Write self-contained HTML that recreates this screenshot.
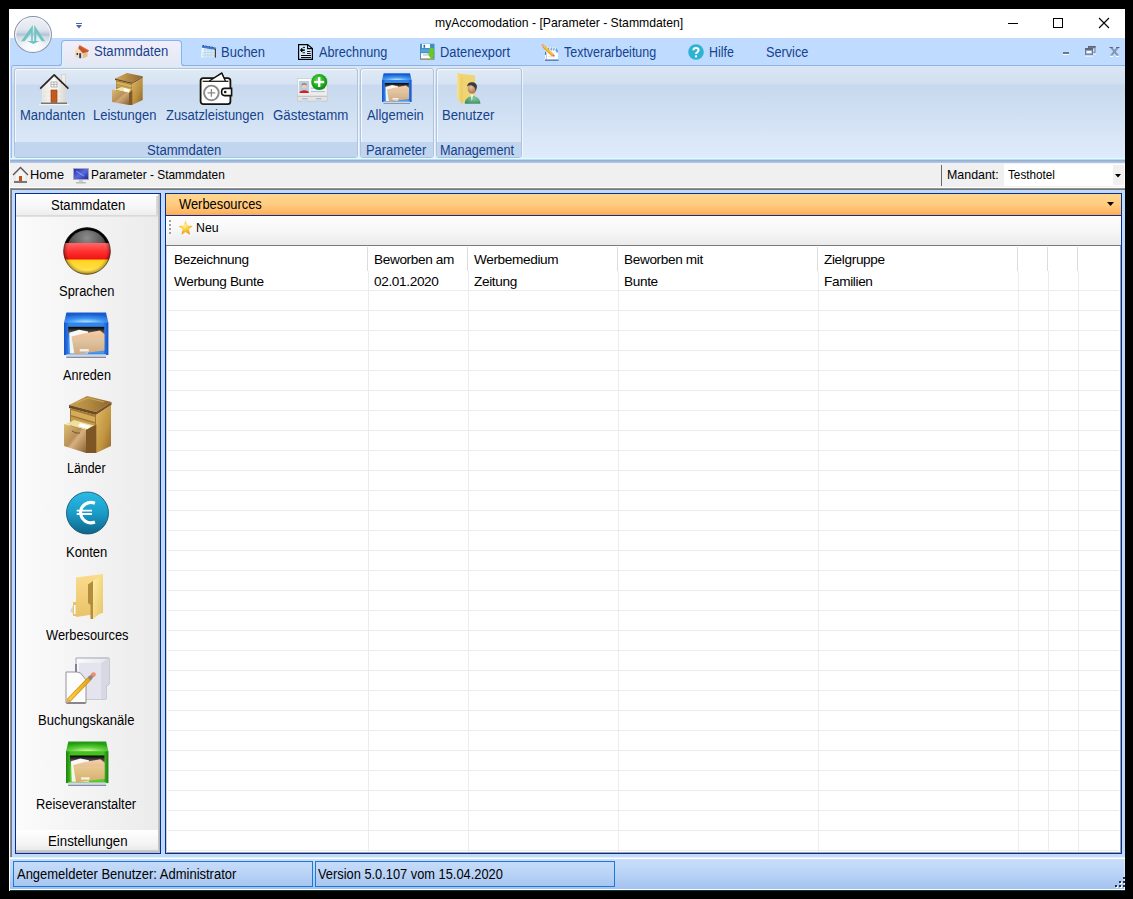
<!DOCTYPE html>
<html><head><meta charset="utf-8">
<style>
*{margin:0;padding:0;box-sizing:border-box}
html,body{width:1133px;height:899px;overflow:hidden;background:#000;font-family:"Liberation Sans",sans-serif;position:relative}
.a{position:absolute}
.t{position:absolute;white-space:nowrap;line-height:1}
svg{position:absolute;overflow:visible}
</style></head><body>
<!-- window frame -->
<div class="a" style="left:9px;top:9px;width:1116px;height:882px;background:#fff"></div>
<div class="a" style="left:10px;top:38px;width:1115px;height:851px;background:#bfdbff"></div>

<!-- title bar -->
<div class="t" style="left:435.03px;top:17px;font-size:12.6px;transform:scaleX(0.9686);transform-origin:0 0;color:#000">myAccomodation - [Parameter - Stammdaten]</div>
<div class="a" style="left:1008px;top:23px;width:10px;height:1px;background:#000"></div>
<div class="a" style="left:1053px;top:18px;width:10px;height:10px;border:1px solid #000"></div>
<svg style="left:1099px;top:18px" width="10" height="10"><path d="M0 0L10 10M10 0L0 10" stroke="#000" stroke-width="1.1"/></svg>

<!-- tabs strip -->
<div class="a" style="left:10px;top:38px;width:1115px;height:28px;background:#bfdbff"></div>
<!-- ribbon panel -->
<div class="a" id="ribbon" style="left:11px;top:65px;width:1114px;height:98px;border-top:1px solid #8db2e3;border-left:1px solid #9ebde6;border-radius:3px 0 0 0;background:linear-gradient(#dbe6f4 0,#d0dff0 18px,#c6d8ee 19px,#e0ecfb 93px,#a7e3f0 94px,#a7e3f0 95px,#9ab4d8 95px)"></div>


<!-- app button -->
<div class="a" style="left:14px;top:16px;width:37.5px;height:37px;border-radius:50%;border:1.3px solid #8793a8;background:radial-gradient(circle at 50% 100%,#ffffff 0,#f6f8fb 25%,rgba(255,255,255,0) 50%),linear-gradient(#eef1f6 0,#e2e7ef 35%,#c8d2e2 46%,#b4c2d8 50%,#d2dae6 58%,#eef1f6 100%);box-shadow:inset 0 0 0 1.2px #f4f6fa"></div>
<svg style="left:14px;top:16px" width="37" height="37">
 <path d="M18.8 9 L7 25.2 L10.6 25.2 L17.2 16.8 V26.5 H18.8Z" fill="#70c4c2"/>
 <path d="M20.2 9 L31.2 25.2 L27.8 25.2 L22.2 17 V26.5 H20.2Z" fill="#70c4c2"/>
 <path d="M13.2 24.9 H25.4 L19.3 27.9Z" fill="#70c4c2"/>
</svg>
<!-- QAT arrow -->
<div class="a" style="left:76px;top:23px;width:6px;height:1px;background:#4a6aa5"></div>
<svg style="left:76px;top:25px" width="6" height="4"><path d="M0 0L6 0L3 3.5Z" fill="#4a6aa5"/></svg>

<!-- active tab -->
<div class="a" style="left:61px;top:40px;width:121px;height:26px;border:1px solid #8db2e3;border-bottom:none;border-radius:4px 4px 0 0;background:linear-gradient(#f0eefa 0,#ebebf7 50%,#e2e8f5 100%);box-shadow:inset 1px 0 0 #d4f4ff,inset -1px 0 0 #d4f4ff"></div>
<div class="a" style="left:59px;top:64px;width:3px;height:1px;background:#a8c4ea"></div>
<div class="a" style="left:181px;top:64px;width:3px;height:1px;background:#a8c4ea"></div>
<div class="a" style="left:61px;top:65px;width:121px;height:2px;background:#e0e8f4"></div>

<!-- tab labels -->
<div class="t" style="left:93.67px;top:44px;font-size:14.0px;transform:scaleX(0.9346);transform-origin:0 0;color:#15428b">Stammdaten</div>
<div class="t" style="left:220.57px;top:45px;font-size:14.0px;transform:scaleX(0.9283);transform-origin:0 0;color:#15428b">Buchen</div>
<div class="t" style="left:318.6px;top:45px;font-size:14.0px;transform:scaleX(0.9053);transform-origin:0 0;color:#15428b">Abrechnung</div>
<div class="t" style="left:439.98px;top:45px;font-size:14.0px;transform:scaleX(0.9173);transform-origin:0 0;color:#15428b">Datenexport</div>
<div class="t" style="left:563.6px;top:45px;font-size:14.0px;transform:scaleX(0.8903);transform-origin:0 0;color:#15428b">Textverarbeitung</div>
<div class="t" style="left:708.81px;top:45px;font-size:14.0px;transform:scaleX(0.8852);transform-origin:0 0;color:#15428b">Hilfe</div>
<div class="t" style="left:766.49px;top:45px;font-size:14.0px;transform:scaleX(0.9067);transform-origin:0 0;color:#15428b">Service</div>
<!-- tab icons -->
<svg style="left:72px;top:42px" width="20" height="20">
 <path d="M3 8.5 L6.5 5.8 L10.8 10.8 L10.8 16.6 L3 15Z" fill="#f6ddb0"/>
 <path d="M6.2 6 L7.6 3.2 L16.9 8.4 L15.6 10.2 L10.8 11.2Z" fill="#c9532b"/>
 <path d="M7.6 3.2 L16.9 8.4 L16.4 9.2 L7.2 4.2Z" fill="#d96a3c"/>
 <path d="M10.8 11.2 L15.6 10.2 L15.6 14.5 L10.8 16.6Z" fill="#e3c088"/>
 <ellipse cx="5.3" cy="12" rx="0.9" ry="1" fill="#1e1e28"/>
 <rect x="7.2" y="11.2" width="1.9" height="5" fill="#1c3f9c"/>
</svg>
<svg style="left:198px;top:42px" width="20" height="20">
 <defs><linearGradient id="calb" x1="0" y1="0" x2="1" y2="1"><stop offset="0" stop-color="#ffffff"/><stop offset="1" stop-color="#cfe4f2"/></linearGradient></defs>
 <path d="M4 4 L17.5 6 L17 15.5 L3 15.5Z" fill="url(#calb)"/>
 <path d="M4 3.2 L17.8 5.5 L17.6 8 L4 5.8Z" fill="#3a78d8"/>
 <path d="M5 3 L6 4.2 M8 3.5 L9 4.6 M11 4 L12 5.2 M14 4.5 L15 5.7" stroke="#333" stroke-width=".8"/>
 <path d="M5 8h11M4.5 10.5h12M4 13h12.5M7 6.5v9M10 7v8.5M13 7.5v8" stroke="#a8d0e8" stroke-width=".7"/>
 <path d="M16.8 6.5 L18 7 L18 15.2 L16.8 16Z" fill="#4a3a28"/>
</svg>
<svg style="left:295px;top:42px" width="20" height="20">
 <path d="M3.6 2.6 H12.6 L17.4 6.6 V17.4 H3.6Z" fill="#d4eaff" stroke="#000" stroke-width="1.2"/>
 <path d="M12.6 2.6 V6.6 H17.4" fill="none" stroke="#000" stroke-width="1.1"/>
 <rect x="5.2" y="7.3" width="4.6" height="1.6" fill="#000"/>
 <rect x="6" y="6.2" width="1.4" height="3.8" fill="#000"/>
 <rect x="7.8" y="4.9" width="2.2" height="0.9" fill="#000"/>
 <rect x="7.5" y="10.3" width="2.5" height="0.9" fill="#000"/>
 <rect x="12" y="9" width="3.6" height="0.9" fill="#000"/>
 <rect x="12" y="11" width="3.6" height="0.9" fill="#000"/>
 <rect x="6" y="13" width="10" height="1" fill="#000"/>
 <rect x="6" y="15" width="10" height="1" fill="#000"/>
</svg>
<svg style="left:416px;top:42px" width="20" height="20">
 <rect x="4" y="1.8" width="14.5" height="16" rx=".6" fill="#3f8ec6"/>
 <rect x="6" y="2" width="8" height="4" fill="#fafcff"/>
 <rect x="7.5" y="2.8" width="1.6" height="3" fill="#2a6ea8"/>
 <rect x="5" y="7.2" width="12.5" height="3" fill="#57a2d6"/>
 <rect x="5" y="11.2" width="11" height="5.8" fill="#fbfcfe"/>
 <rect x="7" y="12.5" width="5" height="1" fill="#aab6c8"/>
 <rect x="5" y="16.2" width="13" height="1" fill="#e0a030"/>
 <path d="M13.5 6 H17.5 V11.5 H19.3 L15.5 17.5 L11.3 11.5 H13.5Z" fill="#6cc81c"/>
</svg>
<svg style="left:539px;top:42px" width="22" height="20">
 <rect x="6" y="7.5" width="13" height="10.5" fill="#f4f6fb"/>
 <rect x="6" y="11.5" width="13" height="6" fill="#ffffff"/>
 <path d="M9.5 5.5v3M12.2 5.5v3M14.8 5.5v3M17.2 6v3" stroke="#5a8ad0" stroke-width="1"/>
 <path d="M9 5v1.5M11.7 5v1.5M14.3 5v1.5M16.7 5.5v1.5" stroke="#fff" stroke-width="1"/>
 <rect x="6" y="9.5" width="1.3" height="3.5" rx=".6" fill="#2a8ae0"/>
 <rect x="17.4" y="7.5" width="1.3" height="3" rx=".6" fill="#2a8ae0"/>
 <rect x="7.2" y="12.5" width=".8" height="5" fill="#f0a0a8"/>
 <path d="M9 14.8 H16" stroke="#ccc" stroke-width=".6"/>
 <rect x="6" y="17.5" width="13.5" height="1.3" fill="#3a72b8"/>
 <path d="M4.5 4.5 L14 13.5" stroke="#e09a10" stroke-width="2.6"/>
 <path d="M4.5 4 L14 13" stroke="#ffc830" stroke-width="1.4"/>
 <path d="M3 2.5 L4.8 4.3" stroke="#f0a090" stroke-width="2.4"/>
 <circle cx="14.6" cy="13.6" r="1" fill="#d87040"/>
</svg>
<svg style="left:688px;top:44px" width="16" height="16">
 <circle cx="8" cy="8" r="7.8" fill="#2eb3d2"/>
 <path d="M5.4 6.2 C5.4 3.2 10.6 3.2 10.6 6.2 C10.6 8 8 8.2 8 10" fill="none" stroke="#fff" stroke-width="2"/>
 <rect x="7" y="11.3" width="2" height="2" fill="#fff"/>
</svg>

<!-- MDI buttons -->
<div class="a" style="left:1063px;top:52px;width:6px;height:2px;background:#6d7888;box-shadow:0 1px 0 #fff"></div>
<svg style="left:1085px;top:46px" width="12" height="12">
 <rect x="3.5" y="0.5" width="6.5" height="6.5" fill="#b8c8e0" stroke="#7688a4" stroke-width="1"/>
 <rect x="3" y="0" width="7.5" height="1.8" fill="#5b6576"/>
 <rect x="5" y="3" width="3.5" height="2" fill="#f4f8ff"/>
 <rect x="0.5" y="2.5" width="7" height="6.5" fill="#8aa0c0" stroke="#6a7c98" stroke-width="1"/>
 <rect x="0" y="2" width="8" height="1.8" fill="#5b6576"/>
 <rect x="1.5" y="5" width="5" height="2.2" fill="#f4f8ff"/>
 <rect x="0" y="9.5" width="8" height="1" fill="#fff"/>
 <rect x="8" y="7.5" width="3" height="1" fill="#fff"/>
</svg>
<svg style="left:1109px;top:47px" width="11" height="10">
 <path d="M1 9.5 H4 M7 9.5 H10" stroke="#fff" stroke-width="1"/>
 <path d="M1 0.5 H3.5 L5.5 3 L7.5 0.5 H10 L6.8 4.5 L10 8.5 H7.5 L5.5 6 L3.5 8.5 H1 L4.2 4.5Z" fill="#8294b0"/>
 <path d="M0.5 0.5 H3.8M7.2 0.5 H10.5" stroke="#5b6576" stroke-width="1"/>
</svg>

<style>
.grp{position:absolute;top:68px;height:90px;border:1px solid #adc4de;border-radius:3px;background:linear-gradient(#e0eaf6 0,#d6e3f2 15px,#c8d9ef 16px,#cfdff2 40px,#dae7f7 73px);box-shadow:inset 1px 1px 0 rgba(255,255,255,.75),1px 0 0 rgba(255,255,255,.6)}
.glab{position:absolute;left:0;right:0;bottom:0;height:15px;background:#c2d5ee;border-radius:0 0 2px 2px}
.gl{position:absolute;white-space:nowrap;line-height:1;font-size:13px;color:#15428b}
</style>
<div class="grp" style="left:14px;width:344px"><div class="glab"></div></div>
<div class="grp" style="left:360px;width:74px"><div class="glab"></div></div>
<div class="grp" style="left:436px;width:86px"><div class="glab"></div></div>
<div class="gl" style="left:20.17px;top:108px;font-size:14.0px;transform:scaleX(0.9309);transform-origin:0 0">Mandanten</div>
<div class="gl" style="left:93.37px;top:108px;font-size:14.0px;transform:scaleX(0.9254);transform-origin:0 0">Leistungen</div>
<div class="gl" style="left:166.2px;top:108px;font-size:14.0px;transform:scaleX(0.9248);transform-origin:0 0">Zusatzleistungen</div>
<div class="gl" style="left:272.95px;top:108px;font-size:14.0px;transform:scaleX(0.95);transform-origin:0 0">Gästestamm</div>
<div class="gl" style="left:367.0px;top:108px;font-size:14.0px;transform:scaleX(0.923);transform-origin:0 0">Allgemein</div>
<div class="gl" style="left:442.47px;top:108px;font-size:14.0px;transform:scaleX(0.9345);transform-origin:0 0">Benutzer</div>
<div class="gl" style="left:147.36px;top:143px;font-size:14.0px;transform:scaleX(0.9372);transform-origin:0 0">Stammdaten</div>
<div class="gl" style="left:365.68px;top:143px;font-size:14.0px;transform:scaleX(0.9234);transform-origin:0 0">Parameter</div>
<div class="gl" style="left:439.79px;top:143px;font-size:14.0px;transform:scaleX(0.9062);transform-origin:0 0">Management</div>

<!-- ribbon icons -->
<svg style="left:38px;top:73px" width="33" height="33">
 <defs><linearGradient id="hw" x1="0" x2="1"><stop offset="0" stop-color="#e8e6df"/><stop offset=".5" stop-color="#fbfbf8"/><stop offset="1" stop-color="#d8d6cf"/></linearGradient></defs>
 <rect x="23.5" y="1.5" width="4" height="14" fill="#efeee8" stroke="#c9c7bf" stroke-width=".6"/>
 <path d="M4 15 L16 4 L28 15 V30 H4Z" fill="url(#hw)"/>
 <path d="M2.2 15.6 L16.2 1.8 L30.4 15.6" fill="none" stroke="#2e2420" stroke-width="1.7" stroke-linejoin="round"/>
 <path d="M5 19h22M5 23h22M5 27h22" stroke="#e0ded6" stroke-width=".6"/>
 <rect x="13" y="9" width="6" height="5" fill="#fafafa" stroke="#999" stroke-width=".7"/>
 <path d="M16 9v5M13 11.5h6" stroke="#999" stroke-width=".6"/>
 <rect x="13" y="17" width="6" height="12.5" fill="#c55a1e" stroke="#8a3a10" stroke-width=".6"/>
 <rect x="3" y="29.5" width="26" height="2" fill="#7a7670"/>
 <rect x="1" y="31" width="30" height="1.2" fill="#f4f4f4"/>
</svg>
<svg style="left:112px;top:73px" width="31" height="32" viewBox="0 0 31 32">
 <defs>
  <linearGradient id="lk1" x1="0" y1="0" x2="1" y2="0"><stop offset="0" stop-color="#d2aa58"/><stop offset="1" stop-color="#8e6630"/></linearGradient>
  <linearGradient id="lk2" x1="0" y1="0" x2="1" y2="1"><stop offset="0" stop-color="#dcb462"/><stop offset=".6" stop-color="#b88c3c"/><stop offset="1" stop-color="#8a6028"/></linearGradient>
  <linearGradient id="lk3" x1="0" y1="0" x2="1" y2="1"><stop offset="0" stop-color="#dcbc70"/><stop offset=".45" stop-color="#b8905a"/><stop offset=".55" stop-color="#d0a878"/><stop offset="1" stop-color="#8a6030"/></linearGradient>
 </defs>
 <path d="M3 5.5 L15 0 L30.7 3.3 L20 9.5Z" fill="url(#lk1)"/>
 <path d="M3 5.5 L20 9.5 V11 L3 7Z" fill="#6e4a20"/>
 <path d="M20 9.5 L30.7 3.3 V5 L20 11Z" fill="#7e5628"/>
 <path d="M4 7 L20.5 11 V29 L4 25Z" fill="#a88038"/>
 <path d="M4.5 8.5 L19.5 12 V14.5 L4.5 11Z" fill="#d8b060"/>
 <path d="M4.5 11.5 L19.5 15 V17.5 L4.5 14Z" fill="#c8a050"/>
 <path d="M20 11 L30.7 5 V27 L20 32Z" fill="url(#lk2)"/>
 <path d="M3 16.5 L10 14 L19 16.5 L17 20Z" fill="#f0e6a8"/>
 <path d="M12 15 L17 16.5 L17 19 L12 18Z" fill="#ffffff"/>
 <path d="M0 16.5 L17 20 V32 L0 29Z" fill="url(#lk3)"/>
 <path d="M17 20 L20.3 17.5 V32 L17 32Z" fill="#7e5a2a"/>
</svg>
<svg style="left:199px;top:72px" width="35" height="34">
 <path d="M10.3 9.3 L22.8 1.2 L26.4 9.3" fill="#fff" stroke="#16120e" stroke-width="1.4" stroke-linejoin="round"/>
 <rect x="1.6" y="6.2" width="29.8" height="26" rx="2.6" fill="#fff" stroke="#16120e" stroke-width="1.8"/>
 <path d="M10.3 9 L22.8 1.2 L26.4 9" fill="#fff" stroke="#16120e" stroke-width="1.4" stroke-linejoin="round"/>
 <path d="M3.6 9.3 H29.5" stroke="#16120e" stroke-width="1.2"/>
 <circle cx="12.4" cy="20.9" r="7.3" fill="none" stroke="#8a8a8a" stroke-width="1.9"/>
 <path d="M12.4 17.1 V24.7 M8.6 20.9 H16.2" stroke="#8a8a8a" stroke-width="1.3"/>
 <path d="M32.6 16.4 H25.6 Q22.6 16.4 22.6 20 Q22.6 23.6 25.6 23.6 H32.6Z" fill="#fff" stroke="#16120e" stroke-width="1.6"/>
 <circle cx="26.2" cy="20" r="1.3" fill="#16120e"/>
</svg>
<svg style="left:296px;top:73px" width="33" height="30" viewBox="0 0 33 30">
 <defs><linearGradient id="card" x1="0" y1="0" x2="0" y2="1"><stop offset="0" stop-color="#fdfdfd"/><stop offset=".7" stop-color="#ececec"/><stop offset="1" stop-color="#dcdcdc"/></linearGradient>
 <radialGradient id="gp" cx=".45" cy=".4" r=".65"><stop offset="0" stop-color="#7ae05a"/><stop offset=".55" stop-color="#22b020"/><stop offset="1" stop-color="#0a7a12"/></radialGradient></defs>
 <rect x="1.4" y="5.6" width="29.8" height="23" fill="url(#card)" stroke="#c4c4c4" stroke-width=".6"/>
 <rect x="3.2" y="8" width="9.8" height="12" fill="#b4cce8"/>
 <circle cx="8.2" cy="13" r="2.4" fill="#f2cca6"/>
 <path d="M5.6 12.5 C5.6 9.5 10.8 9.5 10.8 12.5 C10 11 6.4 11 5.6 12.5Z" fill="#8a5a3a"/>
 <path d="M3.4 20 C3.8 16.3 12.6 16.3 13 20Z" fill="#d42222"/>
 <path d="M15 15.2H29M15 18.6H29" stroke="#8ab0e2" stroke-width=".8"/>
 <path d="M1.5 23.3H31" stroke="#b8b8b8" stroke-width=".9"/>
 <rect x="6.2" y="25.6" width="5.4" height="3.4" fill="#c9daf0"/>
 <rect x="20" y="25.6" width="5.4" height="3.4" fill="#c9daf0"/>
 <path d="M6.2 25.6H11.6M20 25.6H25.4" stroke="#a8a8a8" stroke-width=".7"/>
 <circle cx="23.2" cy="9" r="8" fill="url(#gp)"/>
 <rect x="18.2" y="7.9" width="10" height="2.3" fill="#fff"/>
 <rect x="22.05" y="4" width="2.3" height="10" fill="#fff"/>
</svg>
<svg style="left:382px;top:73px" width="30" height="31" viewBox="0 0 30 31" preserveAspectRatio="none">
 <defs>
  <radialGradient id="ab0l" cx=".5" cy="1" r=".85" fx=".5" fy="1"><stop offset="0" stop-color="#c8f2ff"/><stop offset=".5" stop-color="#3d95f2"/><stop offset="1" stop-color="#1a5ad0"/></radialGradient>
  <linearGradient id="ab0s" x1="0" x2="1"><stop offset="0" stop-color="#1650c8"/><stop offset=".12" stop-color="#2f86ec"/><stop offset=".88" stop-color="#2f86ec"/><stop offset="1" stop-color="#1650c8"/></linearGradient>
  <linearGradient id="ab0o" x1="0" y1="0" x2="0" y2="1"><stop offset="0" stop-color="#000"/><stop offset="1" stop-color="#777"/></linearGradient>
  <linearGradient id="ab0f" x1="0" y1="0" x2="0" y2="1"><stop offset="0" stop-color="#f4d0a8"/><stop offset="1" stop-color="#d89a64"/></linearGradient>
 </defs>
 <path d="M1.6 0.3 H28 L29.6 7.2 H0Z" fill="url(#ab0l)"/>
 <rect x="0" y="7" width="29.6" height="22" fill="url(#ab0s)"/>
 <rect x="2.8" y="10" width="24" height="5" fill="url(#ab0o)"/>
 <path d="M3.5 14 L10 12 L16 13.2 L16 28 L4 28Z" fill="#f8f8f8"/>
 <path d="M5 16.5 L13 14.5 L24 12.5 L27 15 L27 26 L7 28.5Z" fill="url(#ab0f)"/>
 <rect x="10.5" y="25" width="6" height="1.6" fill="#fdf3e8"/>
 <rect x="2.8" y="17.5" width="24" height="10.5" fill="#b8ecff" opacity=".18"/>
 <rect x="1.5" y="28.5" width="26.5" height="2" fill="#d4d8de"/>
 <rect x="1.5" y="30.2" width="26.5" height=".7" fill="#6f7c9c"/>
</svg>
<svg style="left:452px;top:70px" width="32" height="36" viewBox="0 0 32 36">
 <defs>
  <linearGradient id="yf" x1="0" x2="1"><stop offset="0" stop-color="#f6e490"/><stop offset="1" stop-color="#e8c860"/></linearGradient>
  <radialGradient id="hd" cx=".4" cy=".35" r=".75"><stop offset="0" stop-color="#e6c09a"/><stop offset="1" stop-color="#9a6a44"/></radialGradient>
  <radialGradient id="bd" cx=".6" cy=".3" r=".8"><stop offset="0" stop-color="#80c8a0"/><stop offset="1" stop-color="#3a8a5a"/></radialGradient>
 </defs>
 <path d="M5 3.2 L23 5.5 V29 L10 33Z" fill="#f0d474"/>
 <path d="M5 3.2 L10.5 8 V34.5 L5 28Z" fill="url(#yf)"/>
 <ellipse cx="20" cy="18.8" rx="4.3" ry="5" fill="url(#hd)"/>
 <path d="M15.2 16.5 C14.8 11 24.8 10.5 25 16.5 L23.8 21.5 C23.6 15.5 18 13.8 15.2 16.5Z" fill="#3c3c3c"/>
 <path d="M12.8 33.8 C12.3 24.5 28.2 23 28.4 33.8Z" fill="url(#bd)"/>
 <path d="M18.4 24 L19.8 31.5 L21.4 24Z" fill="#e4f2ea"/>
</svg>

<!-- below ribbon lines -->
<div class="a" style="left:10px;top:158px;width:1115px;height:1px;background:#eef6fd"></div>
<div class="a" style="left:10px;top:159px;width:1115px;height:1px;background:#a9e2f2"></div>
<div class="a" style="left:10px;top:160px;width:1115px;height:3px;background:linear-gradient(#8fa9cf,#b5cbe8)"></div>
<!-- breadcrumb -->
<div class="a" style="left:10px;top:163px;width:1115px;height:24px;background:#f0f0f0"></div>
<div class="a" style="left:10px;top:187px;width:1115px;height:1px;background:#fff"></div>
<div class="t" style="left:30.25px;top:169px;font-size:12.2px;transform:scaleX(1.0484);transform-origin:0 0;color:#000">Home</div>
<div class="t" style="left:90.62px;top:169px;font-size:12.2px;transform:scaleX(0.9778);transform-origin:0 0;color:#000">Parameter - Stammdaten</div>
<svg style="left:12px;top:166px" width="17" height="18">
 <path d="M3 8 L8.5 3 L14 8 V15 H3Z" fill="#f5f5f3" stroke="#ccc" stroke-width=".5"/>
 <path d="M1 9 L8.5 1.5 L16 9" fill="none" stroke="#555" stroke-width="1.3"/>
 <rect x="7" y="10" width="3" height="5" fill="#c2501a"/>
 <rect x="2" y="15" width="13" height="2" fill="#777"/>
</svg>
<svg style="left:73px;top:168px" width="16" height="16">
 <defs><linearGradient id="mon" x1="0" y1="0" x2="1" y2="1"><stop offset="0" stop-color="#1c2a9a"/><stop offset=".5" stop-color="#5a6ae0"/><stop offset="1" stop-color="#1a2890"/></linearGradient></defs>
 <rect x="0.5" y="0.5" width="15" height="11" fill="url(#mon)" stroke="#aab" stroke-width=".8"/>
 <path d="M3 3 L11 8" stroke="#9ab0ff" stroke-width=".8"/>
 <rect x="6" y="12" width="4" height="2" fill="#ccc"/>
 <rect x="3" y="14" width="10" height="1.5" fill="#bbb"/>
</svg>
<div class="a" style="left:941px;top:165px;width:1px;height:21px;background:#6b6b6b"></div>
<div class="t" style="left:947.38px;top:169px;font-size:12.2px;transform:scaleX(1.0184);transform-origin:0 0;color:#000">Mandant:</div>
<div class="a" style="left:1004px;top:164px;width:121px;height:22px;background:#fff"></div>
<div class="t" style="left:1007.6px;top:169px;font-size:12.2px;transform:scaleX(0.9625);transform-origin:0 0;color:#000">Testhotel</div>
<div class="a" style="left:1113px;top:165px;width:11px;height:20px;background:#f0f0f0"></div>
<svg style="left:1115px;top:174px" width="7" height="4"><path d="M0 0H6L3 3.5Z" fill="#000"/></svg>

<!-- MDI client sunken border -->
<div class="a" style="left:10px;top:188px;width:1115px;height:2px;background:linear-gradient(#a0a0a0,#696969)"></div>
<div class="a" style="left:10px;top:188px;width:2px;height:669px;background:linear-gradient(90deg,#a0a0a0,#696969)"></div>

<!-- main area light blue gaps (already bg) -->
<!-- sidebar -->
<div class="a" style="left:15px;top:193px;width:146px;height:661px;border:1px solid #0a2d94;background:linear-gradient(90deg,#fbfbfb 0,#f3f3f3 50%,#ebebeb 100%)"></div>
<div class="a" style="left:158px;top:194px;width:2px;height:659px;background:linear-gradient(90deg,#cfcfcf,#b0b0b0)"></div>
<div class="a" style="left:16px;top:194px;width:142px;height:22px;background:linear-gradient(#ffffff,#f4f4f4 70%,#ececec)"></div>
<div class="a" style="left:16px;top:215px;width:142px;height:2px;background:linear-gradient(#d6d6d6,#e4e4e4)"></div>
<div class="a" style="left:156px;top:196px;width:2px;height:19px;background:linear-gradient(90deg,#e0e0e0,#cfcfcf)"></div>
<div class="t" style="left:50.77px;top:198px;font-size:14.0px;transform:scaleX(0.9346);transform-origin:0 0;color:#000">Stammdaten</div>
<div class="a" style="left:16px;top:830px;width:142px;height:22px;background:linear-gradient(#ffffff,#f4f4f4 60%,#e8e8e8)"></div>
<div class="a" style="left:16px;top:850px;width:142px;height:3px;background:linear-gradient(#d0d0d0,#b8b8b8)"></div>
<div class="t" style="left:48.25px;top:834px;font-size:14.0px;transform:scaleX(0.9463);transform-origin:0 0;color:#000">Einstellungen</div>

<div class="t" style="left:58.78px;top:284px;font-size:14.0px;transform:scaleX(0.9241);transform-origin:0 0;color:#000">Sprachen</div>
<div class="t" style="left:63.1px;top:368px;font-size:14.0px;transform:scaleX(0.9058);transform-origin:0 0;color:#000">Anreden</div>
<div class="t" style="left:66.81px;top:461px;font-size:14.0px;transform:scaleX(0.886);transform-origin:0 0;color:#000">Länder</div>
<div class="t" style="left:65.57px;top:545px;font-size:14.0px;transform:scaleX(0.9326);transform-origin:0 0;color:#000">Konten</div>
<div class="t" style="left:45.7px;top:628px;font-size:14.0px;transform:scaleX(0.9167);transform-origin:0 0;color:#000">Werbesources</div>
<div class="t" style="left:38.27px;top:713px;font-size:14.0px;transform:scaleX(0.9324);transform-origin:0 0;color:#000">Buchungskanäle</div>
<div class="t" style="left:35.98px;top:797px;font-size:14.0px;transform:scaleX(0.9185);transform-origin:0 0;color:#000">Reiseveranstalter</div>

<!-- content panel -->
<div class="a" style="left:165px;top:193px;width:957px;height:661px;border:1px solid #0a2d94;background:#fff"></div>
<div class="a" style="left:166px;top:194px;width:955px;height:21px;background:linear-gradient(#ffd68f 0,#ffcc80 50%,#ffb866 85%,#ffa94e 100%)"></div>
<div class="a" style="left:166px;top:215px;width:955px;height:1px;background:#0a2d94"></div>
<div class="t" style="left:178.5px;top:197px;font-size:14.0px;transform:scaleX(0.92);transform-origin:0 0;color:#000">Werbesources</div>
<svg style="left:1107px;top:202px" width="8" height="5"><path d="M0 0H7L3.5 4Z" fill="#000"/></svg>
<div class="a" style="left:166px;top:216px;width:955px;height:29px;background:linear-gradient(#fefefe 0,#f7f7f7 50%,#ebebeb 100%)"></div>
<div class="a" style="left:166px;top:245px;width:955px;height:1px;background:#7a7a7a"></div>
<div class="a" style="left:169px;top:220px;width:2px;height:2px;background:#a0a0a0;box-shadow:0 4px 0 #a0a0a0,0 8px 0 #a0a0a0,0 12px 0 #a0a0a0"></div>
<div class="t" style="left:195.7px;top:222px;font-size:12.4px;transform:scaleX(0.9952);transform-origin:0 0;color:#000">Neu</div>
<svg style="left:178px;top:220px" width="15" height="16">
 <defs><radialGradient id="st" cx=".45" cy=".35" r=".7"><stop offset="0" stop-color="#fff3a0"/><stop offset=".5" stop-color="#fbc431"/><stop offset="1" stop-color="#e88a10"/></radialGradient></defs>
 <path d="M7.5 0.5 L9.6 5.5 L14.5 6 L10.8 9.3 L12 14.8 L7.5 12 L3.5 14.8 L4.5 9.3 L0.5 6 L5.4 5.5Z" fill="url(#st)"/>
</svg>

<!-- grid -->
<div class="a" style="left:168px;top:290px;width:951px;height:1px;background:#ececec"></div><div class="a" style="left:168px;top:310px;width:951px;height:1px;background:#ececec"></div><div class="a" style="left:168px;top:330px;width:951px;height:1px;background:#ececec"></div><div class="a" style="left:168px;top:350px;width:951px;height:1px;background:#ececec"></div><div class="a" style="left:168px;top:370px;width:951px;height:1px;background:#ececec"></div><div class="a" style="left:168px;top:390px;width:951px;height:1px;background:#ececec"></div><div class="a" style="left:168px;top:410px;width:951px;height:1px;background:#ececec"></div><div class="a" style="left:168px;top:430px;width:951px;height:1px;background:#ececec"></div><div class="a" style="left:168px;top:450px;width:951px;height:1px;background:#ececec"></div><div class="a" style="left:168px;top:470px;width:951px;height:1px;background:#ececec"></div><div class="a" style="left:168px;top:490px;width:951px;height:1px;background:#ececec"></div><div class="a" style="left:168px;top:510px;width:951px;height:1px;background:#ececec"></div><div class="a" style="left:168px;top:530px;width:951px;height:1px;background:#ececec"></div><div class="a" style="left:168px;top:550px;width:951px;height:1px;background:#ececec"></div><div class="a" style="left:168px;top:570px;width:951px;height:1px;background:#ececec"></div><div class="a" style="left:168px;top:590px;width:951px;height:1px;background:#ececec"></div><div class="a" style="left:168px;top:610px;width:951px;height:1px;background:#ececec"></div><div class="a" style="left:168px;top:630px;width:951px;height:1px;background:#ececec"></div><div class="a" style="left:168px;top:650px;width:951px;height:1px;background:#ececec"></div><div class="a" style="left:168px;top:670px;width:951px;height:1px;background:#ececec"></div><div class="a" style="left:168px;top:690px;width:951px;height:1px;background:#ececec"></div><div class="a" style="left:168px;top:710px;width:951px;height:1px;background:#ececec"></div><div class="a" style="left:168px;top:730px;width:951px;height:1px;background:#ececec"></div><div class="a" style="left:168px;top:750px;width:951px;height:1px;background:#ececec"></div><div class="a" style="left:168px;top:770px;width:951px;height:1px;background:#ececec"></div><div class="a" style="left:168px;top:790px;width:951px;height:1px;background:#ececec"></div><div class="a" style="left:168px;top:810px;width:951px;height:1px;background:#ececec"></div><div class="a" style="left:168px;top:830px;width:951px;height:1px;background:#ececec"></div><div class="a" style="left:168px;top:850px;width:951px;height:1px;background:#ececec"></div><div class="a" style="left:367px;top:247px;width:1px;height:24px;background:#dcdcdc"></div><div class="a" style="left:467px;top:247px;width:1px;height:24px;background:#dcdcdc"></div><div class="a" style="left:617px;top:247px;width:1px;height:24px;background:#dcdcdc"></div><div class="a" style="left:817px;top:247px;width:1px;height:24px;background:#dcdcdc"></div><div class="a" style="left:1017px;top:247px;width:1px;height:24px;background:#dcdcdc"></div><div class="a" style="left:1047px;top:247px;width:1px;height:24px;background:#dcdcdc"></div><div class="a" style="left:1077px;top:247px;width:1px;height:24px;background:#dcdcdc"></div><div class="a" style="left:368px;top:271px;width:1px;height:581px;background:#ececec"></div><div class="a" style="left:468px;top:271px;width:1px;height:581px;background:#ececec"></div><div class="a" style="left:618px;top:271px;width:1px;height:581px;background:#ececec"></div><div class="a" style="left:818px;top:271px;width:1px;height:581px;background:#ececec"></div><div class="a" style="left:1018px;top:271px;width:1px;height:581px;background:#ececec"></div><div class="a" style="left:1048px;top:271px;width:1px;height:581px;background:#ececec"></div><div class="a" style="left:1078px;top:271px;width:1px;height:581px;background:#ececec"></div>
<div class="a" style="left:166px;top:852px;width:955px;height:1px;background:#a0a0a0"></div>
<div class="a" style="left:1120px;top:246px;width:1px;height:607px;background:#a0a0a0"></div>
<div class="a" style="left:166px;top:246px;width:1px;height:607px;background:#d0d0d0"></div>
<style>.g{position:absolute;white-space:nowrap;line-height:1;font-size:13.6px;letter-spacing:-0.35px;color:#000}</style>
<div class="g" style="left:174px;top:252.6px">Bezeichnung</div>
<div class="g" style="left:374px;top:252.6px">Beworben am</div>
<div class="g" style="left:474px;top:252.6px">Werbemedium</div>
<div class="g" style="left:624px;top:252.6px">Beworben mit</div>
<div class="g" style="left:824px;top:252.6px">Zielgruppe</div>
<div class="g" style="left:174px;top:274.6px">Werbung Bunte</div>
<div class="g" style="left:374px;top:274.6px">02.01.2020</div>
<div class="g" style="left:474px;top:274.6px">Zeitung</div>
<div class="g" style="left:624px;top:274.6px">Bunte</div>
<div class="g" style="left:824px;top:274.6px">Familien</div>

<!-- status bar -->
<div class="a" style="left:10px;top:857px;width:1115px;height:1px;background:#e6ecf4"></div>
<div class="a" style="left:10px;top:858px;width:1115px;height:1px;background:#fff"></div>
<div class="a" style="left:10px;top:859px;width:1115px;height:30px;background:linear-gradient(#c9ddf9 0,#b9d3f6 50%,#a3c2f0 100%)"></div>
<div class="a" style="left:1124px;top:859px;width:1px;height:30px;background:#d8e6fa"></div>
<div class="a" style="left:10px;top:889px;width:1115px;height:1px;background:#fff"></div>
<div class="a" style="left:10px;top:890px;width:1115px;height:1px;background:#0a3a3a"></div>
<div class="a" style="left:13px;top:861px;width:300px;height:26px;border:1px solid #1a7ad8"></div>
<div class="a" style="left:315px;top:861px;width:300px;height:26px;border:1px solid #1a7ad8"></div>
<div class="t" style="left:16.5px;top:867px;font-size:14.0px;transform:scaleX(0.927);transform-origin:0 0;color:#000">Angemeldeter Benutzer: Administrator</div>
<div class="t" style="left:318.1px;top:867px;font-size:14.0px;transform:scaleX(0.9169);transform-origin:0 0;color:#000">Version 5.0.107 vom 15.04.2020</div>
<svg style="left:1114px;top:876px;overflow:hidden" width="11" height="12">
 <g fill="#fff"><rect x="10" y="2" width="2" height="2"/><rect x="6" y="6" width="2" height="2"/><rect x="10" y="6" width="2" height="2"/><rect x="2" y="10" width="2" height="2"/><rect x="6" y="10" width="2" height="2"/><rect x="10" y="10" width="2" height="2"/></g>
 <g fill="#2a3040"><rect x="9" y="1" width="2" height="2"/><rect x="5" y="5" width="2" height="2"/><rect x="9" y="5" width="2" height="2"/><rect x="1" y="9" width="2" height="2"/><rect x="5" y="9" width="2" height="2"/><rect x="9" y="9" width="2" height="2"/></g>
</svg>

<!-- sidebar icons -->
<svg style="left:63px;top:227px" width="48" height="48" viewBox="0 0 48 48">
 <defs>
  <clipPath id="fc"><circle cx="24" cy="24" r="23.5"/></clipPath>
  <radialGradient id="fbk" cx=".5" cy=".2" r=".6"><stop offset="0" stop-color="#8c8c8c"/><stop offset=".6" stop-color="#5a5a5a"/><stop offset="1" stop-color="#2a2a2a"/></radialGradient>
  <linearGradient id="frd" x1="0" y1="0" x2="0" y2="1"><stop offset="0" stop-color="#ff6868"/><stop offset=".5" stop-color="#ff3030"/><stop offset="1" stop-color="#ee1010"/></linearGradient>
  <linearGradient id="fgd" x1="0" y1="0" x2="0" y2="1"><stop offset="0" stop-color="#ffd21a"/><stop offset=".7" stop-color="#ffe050"/><stop offset="1" stop-color="#e0a800"/></linearGradient>
  <radialGradient id="fsh" cx=".5" cy=".5" r=".5"><stop offset=".8" stop-color="#000" stop-opacity="0"/><stop offset="1" stop-color="#000" stop-opacity=".35"/></radialGradient>
 </defs>
 <g clip-path="url(#fc)">
  <rect x="0" y="0" width="48" height="16" fill="#000"/>
  <ellipse cx="24" cy="23" rx="20" ry="20" fill="url(#fbk)"/>
  <rect x="0" y="16" width="48" height="17" fill="url(#frd)"/>
  <rect x="0" y="32.5" width="48" height="16" fill="url(#fgd)"/>
  <circle cx="24" cy="24" r="24" fill="url(#fsh)"/>
 </g>
 <circle cx="24" cy="24" r="23.3" fill="none" stroke="#1a1a1a" stroke-opacity=".55" stroke-width="1"/>
</svg>
<svg style="left:64px;top:312px" width="45" height="46" viewBox="0 0 30 31" preserveAspectRatio="none">
 <defs>
  <radialGradient id="ab1l" cx=".5" cy="1" r=".85" fx=".5" fy="1"><stop offset="0" stop-color="#c8f2ff"/><stop offset=".5" stop-color="#3d95f2"/><stop offset="1" stop-color="#1a5ad0"/></radialGradient>
  <linearGradient id="ab1s" x1="0" x2="1"><stop offset="0" stop-color="#1650c8"/><stop offset=".12" stop-color="#2f86ec"/><stop offset=".88" stop-color="#2f86ec"/><stop offset="1" stop-color="#1650c8"/></linearGradient>
  <linearGradient id="ab1o" x1="0" y1="0" x2="0" y2="1"><stop offset="0" stop-color="#000"/><stop offset="1" stop-color="#777"/></linearGradient>
  <linearGradient id="ab1f" x1="0" y1="0" x2="0" y2="1"><stop offset="0" stop-color="#f4d0a8"/><stop offset="1" stop-color="#d89a64"/></linearGradient>
 </defs>
 <path d="M1.6 0.3 H28 L29.6 7.2 H0Z" fill="url(#ab1l)"/>
 <rect x="0" y="7" width="29.6" height="22" fill="url(#ab1s)"/>
 <rect x="2.8" y="10" width="24" height="5" fill="url(#ab1o)"/>
 <path d="M3.5 14 L10 12 L16 13.2 L16 28 L4 28Z" fill="#f8f8f8"/>
 <path d="M5 16.5 L13 14.5 L24 12.5 L27 15 L27 26 L7 28.5Z" fill="url(#ab1f)"/>
 <rect x="10.5" y="25" width="6" height="1.6" fill="#fdf3e8"/>
 <rect x="2.8" y="17.5" width="24" height="10.5" fill="#b8ecff" opacity=".18"/>
 <rect x="1.5" y="28.5" width="26.5" height="2" fill="#d4d8de"/>
 <rect x="1.5" y="30.2" width="26.5" height=".7" fill="#6f7c9c"/>
</svg><svg style="left:66px;top:741px" width="43" height="45" viewBox="0 0 30 31" preserveAspectRatio="none">
 <defs>
  <radialGradient id="ab2l" cx=".5" cy="1" r=".85" fx=".5" fy="1"><stop offset="0" stop-color="#dcffa8"/><stop offset=".5" stop-color="#5ccf36"/><stop offset="1" stop-color="#239a14"/></radialGradient>
  <linearGradient id="ab2s" x1="0" x2="1"><stop offset="0" stop-color="#1a8010"/><stop offset=".12" stop-color="#44c020"/><stop offset=".88" stop-color="#44c020"/><stop offset="1" stop-color="#1a8010"/></linearGradient>
  <linearGradient id="ab2o" x1="0" y1="0" x2="0" y2="1"><stop offset="0" stop-color="#000"/><stop offset="1" stop-color="#777"/></linearGradient>
  <linearGradient id="ab2f" x1="0" y1="0" x2="0" y2="1"><stop offset="0" stop-color="#f4d0a8"/><stop offset="1" stop-color="#d89a64"/></linearGradient>
 </defs>
 <path d="M1.6 0.3 H28 L29.6 7.2 H0Z" fill="url(#ab2l)"/>
 <rect x="0" y="7" width="29.6" height="22" fill="url(#ab2s)"/>
 <rect x="2.8" y="10" width="24" height="5" fill="url(#ab2o)"/>
 <path d="M3.5 14 L10 12 L16 13.2 L16 28 L4 28Z" fill="#f8f8f8"/>
 <path d="M5 16.5 L13 14.5 L24 12.5 L27 15 L27 26 L7 28.5Z" fill="url(#ab2f)"/>
 <rect x="10.5" y="25" width="6" height="1.6" fill="#fdf3e8"/>
 <rect x="2.8" y="17.5" width="24" height="10.5" fill="#d0ff90" opacity=".18"/>
 <rect x="1.5" y="28.5" width="26.5" height="2" fill="#d4d8de"/>
 <rect x="1.5" y="30.2" width="26.5" height=".7" fill="#6f7c9c"/>
</svg>
<svg style="left:64px;top:396px" width="48" height="58" viewBox="0 0 48 58">
 <defs>
  <linearGradient id="ld1" x1="0" y1="0" x2="1" y2="0"><stop offset="0" stop-color="#c8a050"/><stop offset=".5" stop-color="#b08840"/><stop offset="1" stop-color="#8e6630"/></linearGradient>
  <linearGradient id="ld2" x1="0" y1="0" x2="1" y2="1"><stop offset="0" stop-color="#e2ba66"/><stop offset=".6" stop-color="#c09440"/><stop offset="1" stop-color="#94682c"/></linearGradient>
  <linearGradient id="ld3" x1="0" y1="0" x2="1" y2="1"><stop offset="0" stop-color="#e0c070"/><stop offset=".45" stop-color="#b8905a"/><stop offset=".55" stop-color="#d8b080"/><stop offset="1" stop-color="#8a6030"/></linearGradient>
 </defs>
 <path d="M5 9 L23 0 L47.5 6 L32 16Z" fill="url(#ld1)"/>
 <path d="M12 7 L24 2 L40 6" stroke="#d8b868" stroke-width="1" fill="none" opacity=".7"/>
 <path d="M5 9 L32 16 V19 L5 12Z" fill="#6e4a20"/>
 <path d="M32 16 L47.5 6 V9 L32 19Z" fill="#7a5224"/>
 <path d="M6 12 L32.5 19 V50 L6 43Z" fill="#a07834"/>
 <path d="M7 14 L31 21 V26 L7 19Z" fill="#d4ac5a"/>
 <path d="M7 20.5 L31 27.5 V32 L7 25Z" fill="#c49c4c"/>
 <path d="M32 19 L47 9 V50 L32 57Z" fill="url(#ld2)"/>
 <path d="M2 28 L10 24 L30 29.5 L22 34Z" fill="#eee0a0"/>
 <path d="M16 27 L27 30 L24 33 L14 30Z" fill="#ffffff"/>
 <path d="M0 28 L22 34 V57 L0 50Z" fill="url(#ld3)"/>
 <path d="M8 35 Q12 38 16 37" stroke="#6e4c24" stroke-width=".9" fill="none"/>
 <path d="M22 34 L32.3 28.5 V57 L22 57Z" fill="#7e5626"/>
</svg>
<svg style="left:66px;top:491px" width="43" height="44" viewBox="0 0 43 44">
 <defs><linearGradient id="eu" x1="0" y1="0" x2="0" y2="1"><stop offset="0" stop-color="#2cbbe6"/><stop offset=".5" stop-color="#1a9cc8"/><stop offset="1" stop-color="#0e6488"/></linearGradient></defs>
 <circle cx="21.5" cy="22" r="21" fill="url(#eu)" stroke="#0a4a66" stroke-width=".8"/>
 <path d="M28.9 12.2 A10.3 10.2 0 1 0 28.9 31" fill="none" stroke="#fff" stroke-width="3.1"/>
 <path d="M10.7 19.7 H26 M10.7 23 H26" stroke="#fff" stroke-width="1.8"/>
</svg>
<svg style="left:70px;top:573px" width="36" height="47" viewBox="0 0 36 47">
 <defs>
  <linearGradient id="wf" x1="0" y1="0" x2="0" y2="1"><stop offset="0" stop-color="#fbdc8c"/><stop offset="1" stop-color="#e9c26a"/></linearGradient>
  <linearGradient id="wf2" x1="0" y1="0" x2="1" y2="1"><stop offset="0" stop-color="#fff0a0"/><stop offset="1" stop-color="#e8c26a"/></linearGradient>
 </defs>
 <path d="M0 38 L5 29 L6 43Z" fill="#cfcfcf" opacity=".8"/>
 <path d="M6 4.5 L33 1 V40 L6 44Z" fill="url(#wf)"/>
 <path d="M3 29 H6 V43 H3Z" fill="#e8c26a"/><rect x="4" y="32" width="1.5" height="9" fill="#fff"/>
 <path d="M18 11.5 L23 8 V46 L20.5 46 V32 L18 30Z" fill="#b48c3e"/>
 <path d="M23 8 L33 1 V38.5 L23 45.8Z" fill="url(#wf2)"/>
</svg>
<svg style="left:65px;top:656px" width="46" height="48" viewBox="0 0 46 48">
 <defs>
  <linearGradient id="bf" x1="0" y1="0" x2="1" y2="1"><stop offset="0" stop-color="#fdfdfe"/><stop offset="1" stop-color="#cfd0dc"/></linearGradient>
  <linearGradient id="pc" x1="0" y1="0" x2="1" y2="0"><stop offset="0" stop-color="#ffd040"/><stop offset="1" stop-color="#e8a010"/></linearGradient>
 </defs>
 <path d="M11 2 H44 V28 L41 30 V43 H11Z" fill="url(#bf)" stroke="#9a9aac" stroke-width=".9"/><path d="M11 8 V43" stroke="#707088" stroke-width="1.6"/>
 <path d="M14 7 H36 V43 H14Z" fill="#e4e4ee"/>
 <path d="M36 7 L44 2 V28 L41 30 V43 L36 43Z" fill="#d8d8e4"/>
 <path d="M1 16 H12 Q16 16 18 20 L21 24 V47 H1Z" fill="#fcfcfc" stroke="#8a8a8a" stroke-width=".9"/><path d="M1.5 47 H20.5" stroke="#606060" stroke-width="1.2"/>
 <path d="M3 45 L26 21" stroke="#c8901a" stroke-width="4.5"/>
 <path d="M3 45 L26 21" stroke="url(#pc)" stroke-width="3.2"/>
 <path d="M24 23 L28 19" stroke="#888" stroke-width="3.5"/>
 <circle cx="28.5" cy="18.5" r="2.3" fill="#f48a6a"/>
 <path d="M1.5 46.5 L4.5 43.5" stroke="#e0a070" stroke-width="2"/>
</svg>
</body></html>
